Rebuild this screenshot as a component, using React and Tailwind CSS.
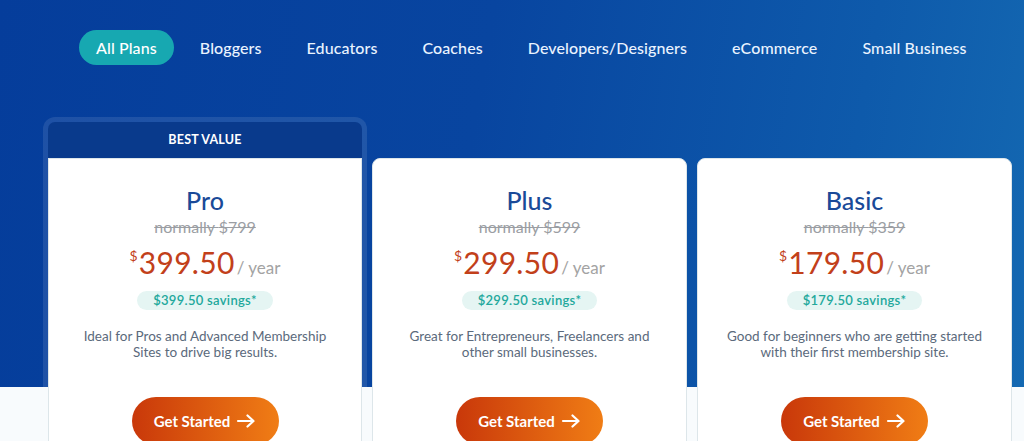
import React from "react";

const font = { fontFamily: "Lato, 'Noto Sans', sans-serif" };

const navItems = ["Bloggers", "Educators", "Coaches", "Developers/Designers", "eCommerce", "Small Business"];

const plans = [
  {
    name: "Pro",
    normally: "$799",
    price: "399.50",
    savings: "$399.50 savings*",
    desc: ["Ideal for Pros and Advanced Membership", "Sites to drive big results."],
    best: true,
  },
  {
    name: "Plus",
    normally: "$599",
    price: "299.50",
    savings: "$299.50 savings*",
    desc: ["Great for Entrepreneurs, Freelancers and", "other small businesses."],
  },
  {
    name: "Basic",
    normally: "$359",
    price: "179.50",
    savings: "$179.50 savings*",
    desc: ["Good for beginners who are getting started", "with their first membership site."],
  },
];

function Arrow() {
  return (
    <svg width="20" height="14" viewBox="0 0 20 14" fill="none" stroke="currentColor" strokeWidth="2.2" strokeLinecap="round" strokeLinejoin="round">
      <path d="M2 7h15" />
      <path d="M11.5 1.5L17.5 7l-6 5.5" />
    </svg>
  );
}

function CardBody({ plan, rounded }) {
  return (
    <div className={`bg-white border border-[#dde6ea] ${rounded ? "rounded-t-[8px]" : ""} h-[300px] flex flex-col items-center`}>
      <div className="pt-[26px] text-[25px] leading-[30px] font-medium text-[#1a4a98]">{plan.name}</div>
      <div className="mt-[2px] text-[16px] leading-[20px] text-[#9b9ea3] line-through">normally {plan.normally}</div>
      <div className="mt-[7px] h-[36px] flex items-baseline">
        <span className="text-[14px] text-[#c2401a] self-start mt-[1px] mr-[1px]">$</span>
        <span className="text-[30px] leading-[36px] text-[#c2401a] tracking-[0.3px]">{plan.price}</span>
        <span className="text-[17px] text-[#a3a3a3] ml-[2px]">/ year</span>
      </div>
      <div className="mt-[11px] h-[19px] px-[16px] rounded-full bg-[#e5f5f3] text-[13px] leading-[19px] font-semibold text-[#22a89c] tracking-[0.3px]">
        {plan.savings}
      </div>
      <div className="mt-[18px] text-[13.5px] leading-[16px] text-[#5b6a7c] text-center">
        {plan.desc[0]}
        <br />
        {plan.desc[1]}
      </div>
      <button className="mt-[37px] h-[48px] w-[147px] rounded-full bg-[linear-gradient(90deg,#c9380a,#f07d15)] text-white text-[15px] font-bold flex items-center justify-center gap-[6px]">
        Get Started
        <Arrow />
      </button>
    </div>
  );
}

export default function App() {
  return (
    <div
      style={font}
      className="w-[1024px] h-[441px] overflow-hidden bg-[linear-gradient(to_bottom,transparent_387px,#f8fbfd_387px),linear-gradient(100deg,#053d9b_0%,#0845a0_45%,#0e5aab_80%,#1469b2_100%)]"
    >
      <nav className="pt-[30px] pl-[79px] flex items-center gap-[7px] text-white text-[16px] tracking-[0.1px]">
        <div className="h-[35px] px-[17px] rounded-full bg-[#17a8b1] flex items-center font-medium">All Plans</div>
        {navItems.map((n) => (
          <div key={n} className="px-[19px] h-[35px] flex items-center text-[#eaf3ff] font-medium">
            {n}
          </div>
        ))}
      </nav>

      <div className="mt-[57px] pl-[48px] flex items-start gap-[10px]">
        <div className="w-[314px] rounded-[7px] shadow-[0_0_0_5px_rgba(255,255,255,0.1)] bg-[#093a8c]">
          <div className="h-[36px] flex items-center justify-center text-white text-[12.5px] font-bold tracking-[0.2px]">
            BEST VALUE
          </div>
          <CardBody plan={plans[0]} />
        </div>
        <div className="w-[315px] mt-[36px]">
          <CardBody plan={plans[1]} rounded />
        </div>
        <div className="w-[315px] mt-[36px]">
          <CardBody plan={plans[2]} rounded />
        </div>
      </div>
    </div>
  );
}
